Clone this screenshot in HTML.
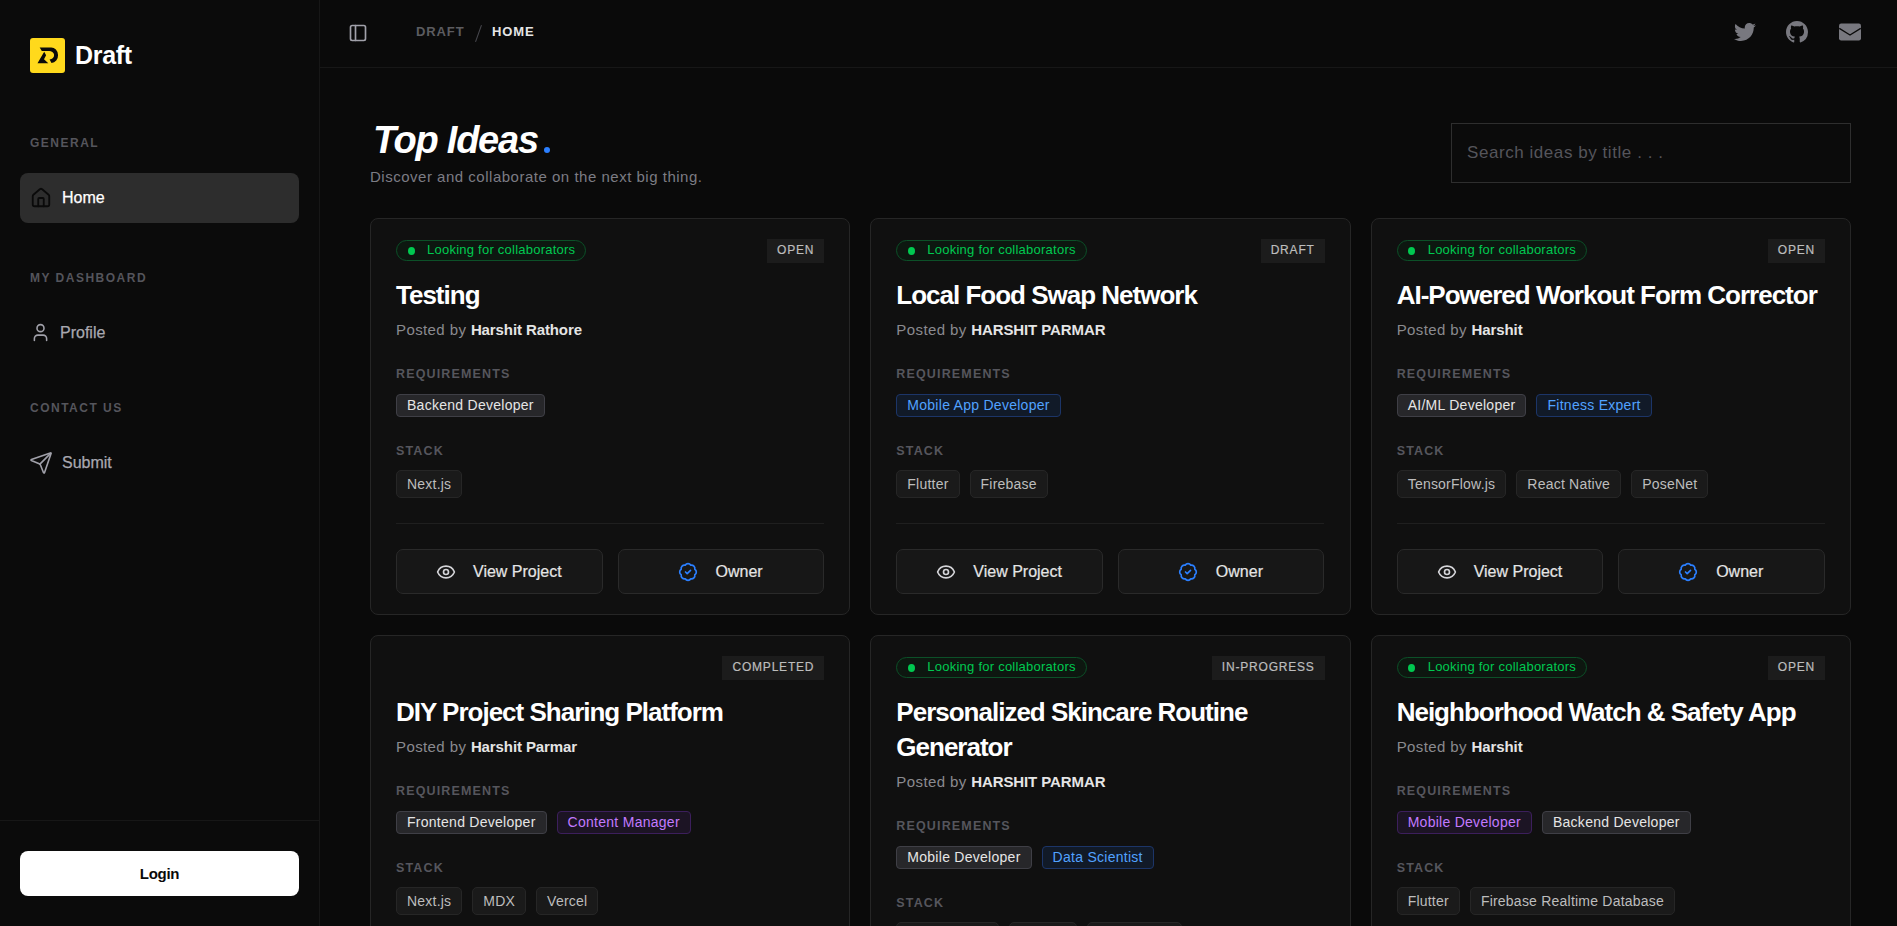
<!DOCTYPE html>
<html><head><meta charset="utf-8">
<style>
*{box-sizing:border-box;margin:0;padding:0}
html,body{width:1897px;height:926px;overflow:hidden;background:#0a0a0a;font-family:"Liberation Sans",sans-serif;color:#fafafa}
.abs{position:absolute}
.ic{position:absolute;display:block}
#sb{position:absolute;left:0;top:0;width:320px;height:926px;background:#0b0b0b;border-right:1px solid #171717}
.logo{position:absolute;left:30px;top:38px;width:35px;height:35px;background:#ffd91c;border-radius:3px}
.brand{position:absolute;left:75px;top:40px;font-size:25px;font-weight:700;color:#fff;line-height:30px;letter-spacing:-0.3px}
.sec{position:absolute;left:30px;font-size:12px;font-weight:700;letter-spacing:1.5px;color:#55555c;line-height:16px}
.nav{position:absolute;left:20px;width:279px;height:50px;border-radius:8px}
.nav.active{background:#2d2d2d}
.nav .t{position:absolute;top:0;line-height:50px;font-size:16px;-webkit-text-stroke:0.25px currentColor}
.sbline{position:absolute;left:0;top:820px;width:319px;height:1px;background:#171717}
.login{position:absolute;left:20px;top:851px;width:279px;height:45px;background:#fff;border-radius:8px;color:#0a0a0a;font-weight:700;font-size:15px;letter-spacing:-0.3px;text-align:center;line-height:45px}
#top{position:absolute;left:320px;top:0;width:1577px;height:68px;border-bottom:1px solid #171717}
.crumb{position:absolute;top:24px;font-size:13px;font-weight:700;letter-spacing:0.9px;line-height:16px}
.h1{position:absolute;left:373px;top:117px;font-size:38px;font-weight:700;font-style:italic;color:#fff;letter-spacing:-1.24px;line-height:46px}
.h1 i{display:inline-block;width:6px;height:6px;border-radius:50%;background:#2b7fff;margin-left:6px}
.sub{position:absolute;left:370px;top:168px;font-size:15px;letter-spacing:0.51px;color:#7c7c84;line-height:18px}
.search{position:absolute;left:1451px;top:123px;width:400px;height:60px;border:1px solid #2e2e2e;background:#0b0b0b}
.search span{position:absolute;left:15px;top:0;line-height:58px;font-size:17px;letter-spacing:0.56px;color:#55555b}
.card{position:absolute;width:480.33px;background:#101010;border:1px solid #262626;border-radius:8px;overflow:hidden}
.badge{position:absolute;left:25px;top:21px;height:21px;border:1px solid #0c5028;background:#0d1710;border-radius:11px;padding:0 10px 0 30px;font-size:13px;letter-spacing:0.24px;line-height:17px;color:#00c950}
.badge:before{content:"";position:absolute;left:10.5px;top:5.5px;width:7px;height:8px;border-radius:50%;background:#00c950}
.status{position:absolute;right:25px;top:20px;height:24px;background:#1c1c1c;padding:0 10px;-webkit-text-stroke:0.2px #bdbdbd;font-size:12px;line-height:22.5px;letter-spacing:0.8px;color:#bdbdbd;font-weight:500}
.title{position:absolute;left:25px;font-size:26px;font-weight:700;color:#fff;line-height:35px;letter-spacing:-1px;width:440px}
.posted{position:absolute;left:25px;font-size:15px;letter-spacing:0.4px;color:#8a8a8f;line-height:18px}
.posted b{color:#e5e5e5;font-weight:700;letter-spacing:-0.1px}
.lbl{position:absolute;left:25px;font-size:12.5px;font-weight:700;letter-spacing:1.15px;color:#56565d;line-height:16px}
.tags{position:absolute;left:25px;display:flex;gap:10px}
.tag{height:23px;margin-top:1px;border:1px solid #3f3f46;background:#27272a;border-radius:4px;padding:0 10px;font-size:14px;letter-spacing:0.27px;line-height:21px;color:#e5e5e5;white-space:nowrap}
.tag.blue{border-color:#1c3568;background:#111a28;color:#51a2ff}
.tag.purple{border-color:#3c1f5c;background:#1c1424;color:#c27aff}
.stk{height:28px;border:1px solid #262626;background:#1a1a1a;border-radius:5px;padding:0 10px;font-size:14px;letter-spacing:0.22px;line-height:26px;color:#bdbdbd;white-space:nowrap}
.div{position:absolute;left:25px;width:428px;height:1px;background:#1f1f1f}
.btn{position:absolute;width:206.5px;-webkit-text-stroke:0.2px #e5e5e5;height:45px;border:1px solid #2a2a2a;background:#171717;border-radius:7px;font-size:16px;line-height:43px;color:#e5e5e5;font-weight:500}
.btn svg{position:absolute}
.btn span{position:absolute;top:0}
</style></head>
<body>
<div id="sb">
  <div class="logo"><svg width="35" height="35" viewBox="0 0 35 35" style="position:absolute;left:0;top:0"><path fill="#0a0a0a" d="M9.7 9.4 H21 A6.8 7.8 0 0 1 21.5 25 L19.6 21.6 A4.9 4.3 0 0 0 18.7 12.9 H11.8 Z"/><path fill="#0a0a0a" d="M14.2 13.8 L16.1 17.2 L14 21.3 L18.3 25.2 H7.5 Z"/></svg></div>
  <div class="brand">Draft</div>
  <div class="sec" style="top:135px">GENERAL</div>
  <div class="nav active" style="top:173px"><svg class="ic" style="left:10px;top:14px" width="22" height="22" viewBox="0 0 24 24" fill="none" stroke="#0a0a0a" stroke-width="2" stroke-linecap="round" stroke-linejoin="round"><path d="M15 21v-8a1 1 0 0 0-1-1h-4a1 1 0 0 0-1 1v8"/><path d="M3 10a2 2 0 0 1 .709-1.528l7-5.999a2 2 0 0 1 2.582 0l7 5.999A2 2 0 0 1 21 10v9a2 2 0 0 1-2 2H5a2 2 0 0 1-2-2z"/></svg><div class="t" style="left:42px;color:#fff">Home</div></div>
  <div class="sec" style="top:270px">MY DASHBOARD</div>
  <div class="nav" style="top:307px"><svg class="ic" style="left:10px;top:15px" width="21" height="21" viewBox="0 0 24 24" fill="none" stroke="#a1a1aa" stroke-width="1.8" stroke-linecap="round" stroke-linejoin="round"><path d="M19 21v-2a4 4 0 0 0-4-4H9a4 4 0 0 0-4 4v2"/><circle cx="12" cy="7" r="4"/></svg><div class="t" style="left:40px;top:1px;color:#a8a8b0">Profile</div></div>
  <div class="sec" style="top:400px">CONTACT US</div>
  <div class="nav" style="top:437px"><svg class="ic" style="left:9px;top:14px" width="24" height="24" viewBox="0 0 24 24" fill="none" stroke="#a1a1aa" stroke-width="1.6" stroke-linecap="round" stroke-linejoin="round"><path d="M14.536 21.686a.5.5 0 0 0 .937-.024l6.5-19a.496.496 0 0 0-.635-.635l-19 6.5a.5.5 0 0 0-.024.937l7.93 3.18a2 2 0 0 1 1.112 1.11z"/><path d="m21.854 2.147-10.94 10.939"/></svg><div class="t" style="left:42px;top:1px;color:#a8a8b0">Submit</div></div>
  <div class="sbline"></div>
  <div class="login">Login</div>
</div>
<div id="top">
  <svg class="ic" style="left:28px;top:23px" width="20" height="20" viewBox="0 0 24 24" fill="none" stroke="#a1a1aa" stroke-width="2" stroke-linecap="round" stroke-linejoin="round"><rect width="18" height="18" x="3" y="3" rx="2"/><path d="M9 3v18"/></svg><svg class="ic" style="left:1414px;top:21px" width="22" height="22" viewBox="0 0 512 512"><path fill="#78787f" d="M459.37 151.716c.325 4.548.325 9.097.325 13.645 0 138.72-105.583 298.558-298.558 298.558-59.452 0-114.68-17.219-161.137-47.106 8.447.974 16.568 1.299 25.34 1.299 49.055 0 94.213-16.568 130.274-44.832-46.132-.975-84.792-31.188-98.112-72.772 6.498.974 12.995 1.624 19.818 1.624 9.421 0 18.843-1.3 27.614-3.573-48.081-9.747-84.143-51.98-84.143-102.985v-1.299c13.969 7.797 30.214 12.67 47.431 13.319-28.264-18.843-46.781-51.005-46.781-87.391 0-19.492 5.197-37.36 14.294-52.954 51.655 63.675 129.3 105.258 216.365 109.807-1.624-7.797-2.599-15.918-2.599-24.04 0-57.828 46.782-104.934 104.934-104.934 30.213 0 57.502 12.67 76.67 33.137 23.715-4.548 46.456-13.32 66.599-25.34-7.798 24.366-24.366 44.833-46.132 57.827 21.117-2.273 41.584-8.122 60.426-16.243-14.292 20.791-32.161 39.308-52.628 54.253z"/></svg><svg class="ic" style="left:1466px;top:21px" width="22" height="22" viewBox="0 0 16 16"><path fill="#78787f" d="M8 0C3.58 0 0 3.58 0 8c0 3.54 2.29 6.53 5.47 7.59.4.07.55-.17.55-.38 0-.19-.01-.82-.01-1.49-2.01.37-2.53-.49-2.69-.94-.09-.23-.48-.94-.82-1.13-.28-.15-.68-.52-.01-.53.63-.01 1.08.58 1.23.78.72 1.21 1.87.87 2.33.66.07-.52.28-.87.51-1.07-1.78-.2-3.64-.89-3.64-3.95 0-.87.31-1.59.82-2.15-.08-.2-.36-1.02.08-2.12 0 0 .67-.21 2.2.82.64-.18 1.32-.27 2-.27.68 0 1.36.09 2 .27 1.53-1.04 2.2-.82 2.2-.82.44 1.1.16 1.92.08 2.12.51.56.82 1.27.82 2.15 0 3.07-1.87 3.75-3.65 3.95.29.25.54.73.54 1.48 0 1.07-.01 1.93-.01 2.2 0 .21.15.46.55.38A8.013 8.013 0 0016 8c0-4.42-3.58-8-8-8z"/></svg><svg class="ic" style="left:1519px;top:23px" width="22" height="18" viewBox="0 0 22 18"><rect x="0" y="0.5" width="22" height="17" rx="2.2" fill="#78787f"/><path d="M0.3 5.3 L11 12 L21.7 5.3" fill="none" stroke="#0a0a0a" stroke-width="1.3" stroke-linejoin="round"/></svg>
  <div class="crumb" style="left:96px;color:#5c5c60">DRAFT</div>
  <svg class="ic" style="left:154px;top:24px" width="9" height="19" viewBox="0 0 9 19"><path d="M7.3 1.6 L1.7 17.4" stroke="#46464c" stroke-width="1.1" stroke-linecap="round"/></svg>
  <div class="crumb" style="left:172px;color:#e5e5e5">HOME</div>
</div>
<div class="h1">Top Ideas<i></i></div>
<div class="sub">Discover and collaborate on the next big thing.</div>
<div class="search"><span>Search ideas by title . . .</span></div>

<!-- CARDS -->
<div class="card" style="left:370px;top:218px;height:397px"><div class="badge">Looking for collaborators</div><div class="status">OPEN</div><div class="title" style="top:59px">Testing</div><div class="posted" style="top:102px">Posted by <b>Harshit Rathore</b></div><div class="lbl" style="top:147px">REQUIREMENTS</div><div class="tags" style="top:174px"><div class="tag ">Backend Developer</div></div><div class="lbl" style="top:224px">STACK</div><div class="tags" style="top:251px"><div class="stk">Next.js</div></div><div class="div" style="top:304px"></div><div class="btn" style="left:25px;top:330px"><svg style="left:39px;top:12px" width="20" height="20" viewBox="0 0 24 24" fill="none" stroke="#d4d4d8" stroke-width="2" stroke-linecap="round" stroke-linejoin="round"><path d="M2.062 12.348a1 1 0 0 1 0-.696 10.75 10.75 0 0 1 19.876 0 1 1 0 0 1 0 .696 10.75 10.75 0 0 1-19.876 0"/><circle cx="12" cy="12" r="3"/></svg><span style="left:76px">View Project</span></div><div class="btn" style="left:246.5px;top:330px"><svg style="left:59px;top:12px" width="20" height="20" viewBox="0 0 24 24" fill="none" stroke="#2b7fff" stroke-width="2" stroke-linecap="round" stroke-linejoin="round"><path d="M3.85 8.62a4 4 0 0 1 4.78-4.77 4 4 0 0 1 6.74 0 4 4 0 0 1 4.78 4.78 4 4 0 0 1 0 6.74 4 4 0 0 1-4.77 4.78 4 4 0 0 1-6.75 0 4 4 0 0 1-4.78-4.77 4 4 0 0 1 0-6.76Z"/><path d="m9 12 2 2 4-4"/></svg><span style="left:97px">Owner</span></div></div>
<div class="card" style="left:870.33px;top:218px;height:397px"><div class="badge">Looking for collaborators</div><div class="status">DRAFT</div><div class="title" style="top:59px">Local Food Swap Network</div><div class="posted" style="top:102px">Posted by <b>HARSHIT PARMAR</b></div><div class="lbl" style="top:147px">REQUIREMENTS</div><div class="tags" style="top:174px"><div class="tag blue">Mobile App Developer</div></div><div class="lbl" style="top:224px">STACK</div><div class="tags" style="top:251px"><div class="stk">Flutter</div><div class="stk">Firebase</div></div><div class="div" style="top:304px"></div><div class="btn" style="left:25px;top:330px"><svg style="left:39px;top:12px" width="20" height="20" viewBox="0 0 24 24" fill="none" stroke="#d4d4d8" stroke-width="2" stroke-linecap="round" stroke-linejoin="round"><path d="M2.062 12.348a1 1 0 0 1 0-.696 10.75 10.75 0 0 1 19.876 0 1 1 0 0 1 0 .696 10.75 10.75 0 0 1-19.876 0"/><circle cx="12" cy="12" r="3"/></svg><span style="left:76px">View Project</span></div><div class="btn" style="left:246.5px;top:330px"><svg style="left:59px;top:12px" width="20" height="20" viewBox="0 0 24 24" fill="none" stroke="#2b7fff" stroke-width="2" stroke-linecap="round" stroke-linejoin="round"><path d="M3.85 8.62a4 4 0 0 1 4.78-4.77 4 4 0 0 1 6.74 0 4 4 0 0 1 4.78 4.78 4 4 0 0 1 0 6.74 4 4 0 0 1-4.77 4.78 4 4 0 0 1-6.75 0 4 4 0 0 1-4.78-4.77 4 4 0 0 1 0-6.76Z"/><path d="m9 12 2 2 4-4"/></svg><span style="left:97px">Owner</span></div></div>
<div class="card" style="left:1370.67px;top:218px;height:397px"><div class="badge">Looking for collaborators</div><div class="status">OPEN</div><div class="title" style="top:59px">AI-Powered Workout Form Corrector</div><div class="posted" style="top:102px">Posted by <b>Harshit</b></div><div class="lbl" style="top:147px">REQUIREMENTS</div><div class="tags" style="top:174px"><div class="tag ">AI/ML Developer</div><div class="tag blue">Fitness Expert</div></div><div class="lbl" style="top:224px">STACK</div><div class="tags" style="top:251px"><div class="stk">TensorFlow.js</div><div class="stk">React Native</div><div class="stk">PoseNet</div></div><div class="div" style="top:304px"></div><div class="btn" style="left:25px;top:330px"><svg style="left:39px;top:12px" width="20" height="20" viewBox="0 0 24 24" fill="none" stroke="#d4d4d8" stroke-width="2" stroke-linecap="round" stroke-linejoin="round"><path d="M2.062 12.348a1 1 0 0 1 0-.696 10.75 10.75 0 0 1 19.876 0 1 1 0 0 1 0 .696 10.75 10.75 0 0 1-19.876 0"/><circle cx="12" cy="12" r="3"/></svg><span style="left:76px">View Project</span></div><div class="btn" style="left:246.5px;top:330px"><svg style="left:59px;top:12px" width="20" height="20" viewBox="0 0 24 24" fill="none" stroke="#2b7fff" stroke-width="2" stroke-linecap="round" stroke-linejoin="round"><path d="M3.85 8.62a4 4 0 0 1 4.78-4.77 4 4 0 0 1 6.74 0 4 4 0 0 1 4.78 4.78 4 4 0 0 1 0 6.74 4 4 0 0 1-4.77 4.78 4 4 0 0 1-6.75 0 4 4 0 0 1-4.78-4.77 4 4 0 0 1 0-6.76Z"/><path d="m9 12 2 2 4-4"/></svg><span style="left:97px">Owner</span></div></div>
<div class="card" style="left:370px;top:635px;height:400px"><div class="status">COMPLETED</div><div class="title" style="top:59px">DIY Project Sharing Platform</div><div class="posted" style="top:102px">Posted by <b>Harshit Parmar</b></div><div class="lbl" style="top:147px">REQUIREMENTS</div><div class="tags" style="top:174px"><div class="tag ">Frontend Developer</div><div class="tag purple">Content Manager</div></div><div class="lbl" style="top:224px">STACK</div><div class="tags" style="top:251px"><div class="stk">Next.js</div><div class="stk">MDX</div><div class="stk">Vercel</div></div></div>
<div class="card" style="left:870.33px;top:635px;height:400px"><div class="badge">Looking for collaborators</div><div class="status">IN-PROGRESS</div><div class="title" style="top:59px">Personalized Skincare Routine<br>Generator</div><div class="posted" style="top:137px">Posted by <b>HARSHIT PARMAR</b></div><div class="lbl" style="top:182px">REQUIREMENTS</div><div class="tags" style="top:209px"><div class="tag ">Mobile Developer</div><div class="tag blue">Data Scientist</div></div><div class="lbl" style="top:259px">STACK</div><div class="tags" style="top:286px"><div class="stk" style="width:103px">React Native</div><div class="stk" style="width:68px">Python</div><div class="stk" style="width:95px">Vision API</div></div></div>
<div class="card" style="left:1370.67px;top:635px;height:400px"><div class="badge">Looking for collaborators</div><div class="status">OPEN</div><div class="title" style="top:59px">Neighborhood Watch &amp; Safety App</div><div class="posted" style="top:102px">Posted by <b>Harshit</b></div><div class="lbl" style="top:147px">REQUIREMENTS</div><div class="tags" style="top:174px"><div class="tag purple">Mobile Developer</div><div class="tag ">Backend Developer</div></div><div class="lbl" style="top:224px">STACK</div><div class="tags" style="top:251px"><div class="stk">Flutter</div><div class="stk">Firebase Realtime Database</div></div></div>
</body></html>
